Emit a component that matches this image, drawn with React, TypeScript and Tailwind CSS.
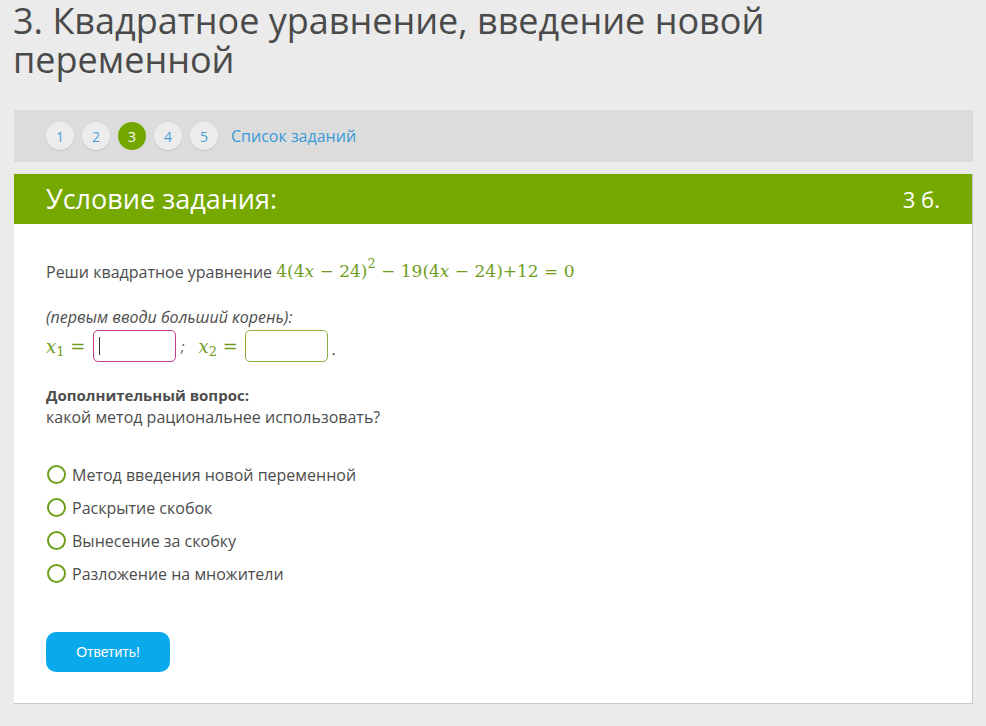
import React from "react";

const M = "text-[#6f9c1f]";
const MF = { fontFamily: '"DejaVu Serif", "Liberation Serif", serif', fontSize: "17px" };
const MF2 = { fontFamily: '"DejaVu Serif", "Liberation Serif", serif', fontSize: "18px" };

function Radio({ label }: { label: string }) {
  return (
    <div className="flex items-center h-[33px]">
      <span className="w-[19px] h-[19px] rounded-full border-2 border-[#6fa01a] bg-white mr-[6px] ml-[1px]" />
      <span className="text-[16px] text-[#4d4d4d]">{label}</span>
    </div>
  );
}

export default function App() {
  return (
    <div
      className="min-h-[726px] w-[986px] bg-[#ebebeb] pl-[14px] pr-[13px] overflow-hidden"
      style={{ fontFamily: '"Open Sans", "Noto Sans", sans-serif' }}
    >
      <h1 className="text-[36px] leading-[39px] text-[#4a4a4a] pt-[1px] h-[110px] -ml-[1px]">
        3. Квадратное уравнение, введение новой переменной
      </h1>
      <div className="h-[52px] bg-[#dcdcdc] flex items-center pl-[32px] gap-[8px]">
        {[1, 2, 3, 4, 5].map((n) =>
          n === 3 ? (
            <span
              key={n}
              className="w-[28px] h-[28px] rounded-full bg-[#73a600] text-white text-[14px] flex items-center justify-center"
            >
              {n}
            </span>
          ) : (
            <span
              key={n}
              className="w-[28px] h-[28px] rounded-full bg-[#ececec] text-[#4a9fd8] text-[14px] flex items-center justify-center shadow-[0_1px_1px_rgba(0,0,0,0.12)]"
            >
              {n}
            </span>
          )
        )}
        <span className="text-[16px] text-[#3a9ad9] ml-[5px]">Список заданий</span>
      </div>
      <div className="mt-[12px] h-[530px] bg-white border-r border-b border-[#c9c9c9]">
        <div className="h-[50px] bg-[#76a900] flex items-center justify-between pl-[32px] pr-[32px] text-white">
          <span className="text-[27px]">Условие задания:</span>
          <span className="text-[22px]">3 б.</span>
        </div>
        <div className="pl-[32px] pt-[36px] text-[#4d4d4d]">
          <div className="flex items-center h-[24px] text-[16px]">
            <span>Реши квадратное уравнение&nbsp;</span>
            <span className={`${M} whitespace-pre`} style={MF}>
              4(4<i>x</i> − 24)<sup className="text-[13px] -top-[9px]">2</sup> − 19(4<i>x</i> − 24)+12 = 0
            </span>
          </div>
          <div className="mt-[22px] italic text-[16px] leading-[22px]">(первым вводи больший корень):</div>
          <div className="flex items-center h-[36px]">
            <span className={`${M} whitespace-pre`} style={MF2}>
              <i>x</i>
              <sub className="text-[13px]">1</sub> ={" "}
            </span>
            <span className="w-[83px] h-[32px] rounded-[5px] border border-[#c23a86] ml-[2px] flex items-center pl-[5px]">
              <span className="w-px h-[18px] bg-[#333]" />
            </span>
            <span className="text-[14px] italic ml-[5px] mr-[14px]">;</span>
            <span className={`${M} whitespace-pre`} style={MF2}>
              <i>x</i>
              <sub className="text-[13px]">2</sub> ={" "}
            </span>
            <span className="w-[83px] h-[32px] rounded-[5px] border border-[#8cb040] ml-[2px]" />
            <span className="ml-[3px] mt-[6px]">.</span>
          </div>
          <div className="mt-[20px] text-[15px] leading-[22px] font-bold">Дополнительный вопрос:</div>
          <div className="text-[16px] leading-[22px]">какой метод рациональнее использовать?</div>
          <div className="mt-[30px]">
            <Radio label="Метод введения новой переменной" />
            <Radio label="Раскрытие скобок" />
            <Radio label="Вынесение за скобку" />
            <Radio label="Разложение на множители" />
          </div>
          <button
            className="mt-[42px] w-[124px] h-[40px] rounded-[10px] bg-[#0aa9ec] text-white text-[14px]"
            style={{ fontFamily: '"Liberation Sans", Arial, sans-serif' }}
          >
            Ответить!
          </button>
        </div>
      </div>
    </div>
  );
}
